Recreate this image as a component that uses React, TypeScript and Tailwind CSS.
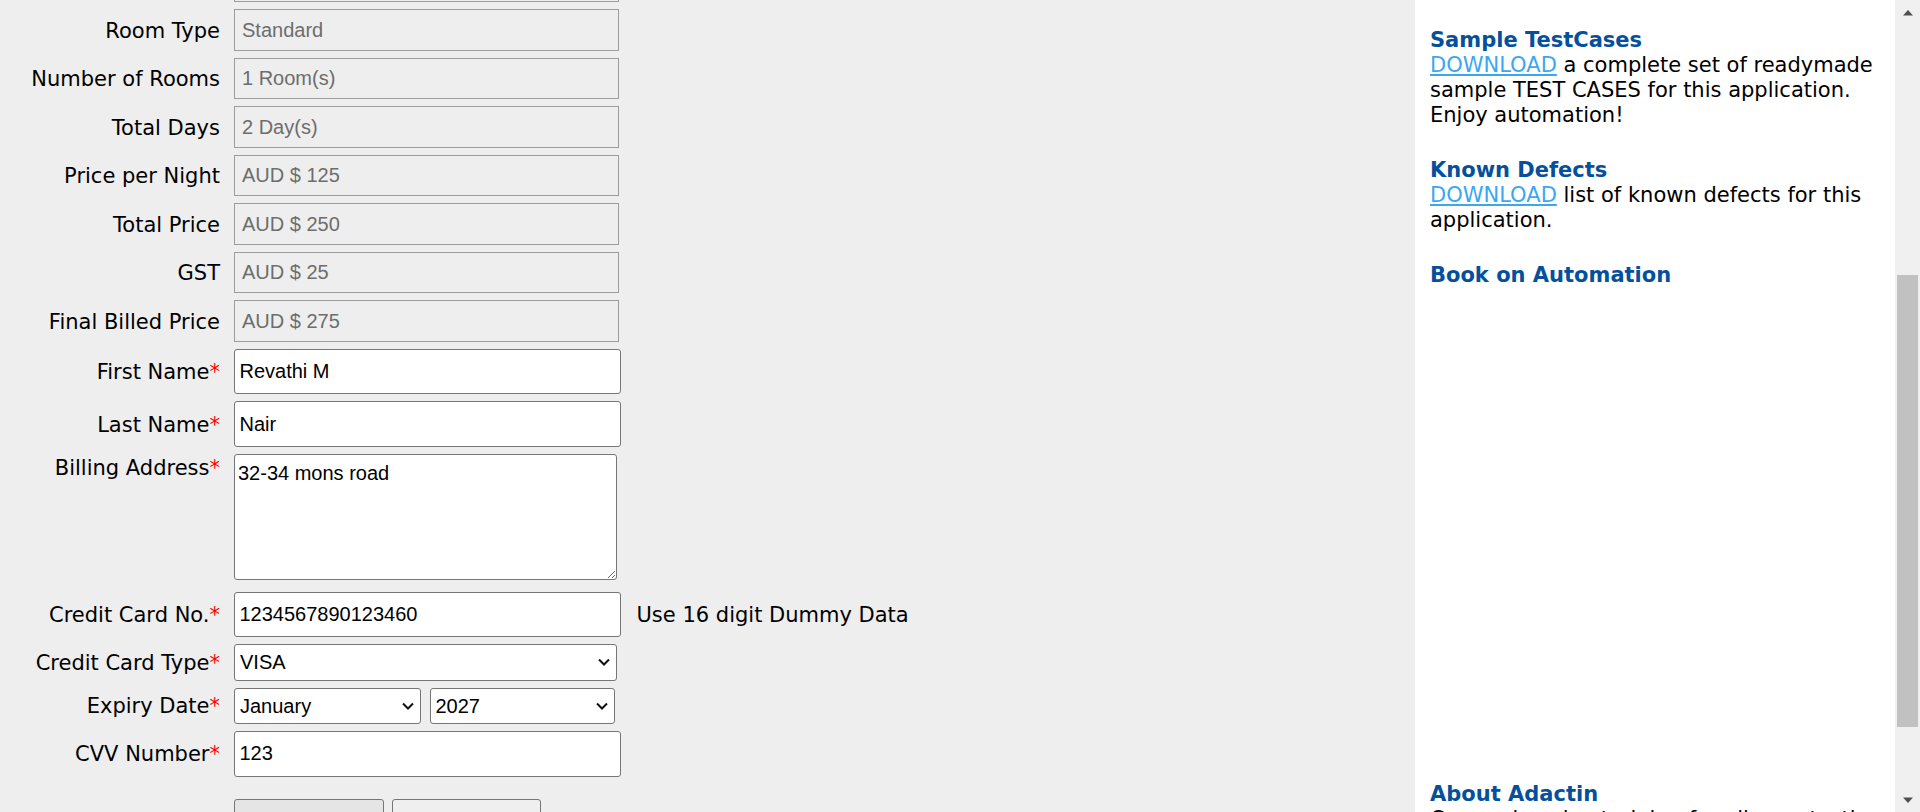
import React from "react";

const LABEL_FONT = "font-['DejaVu_Sans','Verdana',sans-serif]";

function Chevron() {
  return (
    <svg
      className="pointer-events-none absolute right-[7px] top-1/2 -translate-y-1/2"
      width="12"
      height="8"
      viewBox="0 0 12 8"
      fill="none"
    >
      <path d="M1 1.5 L6 6.5 L11 1.5" stroke="#111" strokeWidth="2" />
    </svg>
  );
}

function Label({ text, req }: { text: string; req?: boolean }) {
  return (
    <div className="w-[220px] shrink-0 pt-[2px] text-right text-[21px] leading-[25px] text-black">
      {text}
      {req ? <span className="text-[21px] text-[#ff0000]">*</span> : null}
    </div>
  );
}

function ReadOnlyRow({ label, value }: { label: string; value: string }) {
  return (
    <div className="flex items-center gap-[14px]">
      <Label text={label} />
      <input
        readOnly
        value={value}
        className="h-[41.5px] w-[385px] border border-[#9c9c9c] bg-[#eeeeee] pl-[7px] font-['Liberation_Sans',Arial,sans-serif] text-[20px] text-[#6d6d6d] outline-none"
      />
    </div>
  );
}

function TextRow({ label, value }: { label: string; value: string }) {
  return (
    <div className="flex items-center gap-[14px]">
      <Label text={label} req />
      <input
        readOnly
        value={value}
        className="h-[45.5px] w-[386.5px] rounded-[3px] border border-[#767676] bg-white pl-[4.5px] font-['Liberation_Sans',Arial,sans-serif] text-[20px] text-black outline-none"
      />
    </div>
  );
}

export default function App() {
  return (
    <div className={`flex h-[812px] w-[1920px] overflow-hidden bg-[#eeeeee] ${LABEL_FONT}`}>
      {/* Main form area */}
      <div className="w-[1415px] shrink-0 overflow-hidden">
        <div className="mt-[-39.2px] flex flex-col gap-[7px]">
          <ReadOnlyRow label="Hotel Name" value="Hotel Creek" />
          <ReadOnlyRow label="Room Type" value="Standard" />
          <ReadOnlyRow label="Number of Rooms" value="1 Room(s)" />
          <ReadOnlyRow label="Total Days" value="2 Day(s)" />
          <ReadOnlyRow label="Price per Night" value="AUD $ 125" />
          <ReadOnlyRow label="Total Price" value="AUD $ 250" />
          <ReadOnlyRow label="GST" value="AUD $ 25" />
          <ReadOnlyRow label="Final Billed Price" value="AUD $ 275" />
          <TextRow label="First Name" value="Revathi M" />
          <TextRow label="Last Name" value="Nair" />

          <div className="flex items-start gap-[14px]">
            <Label text="Billing Address" req />
            <textarea
              readOnly
              defaultValue="32-34 mons road"
              className="h-[126.5px] w-[382.5px] resize rounded-[3px] border border-[#767676] bg-white pl-[3px] pt-[7px] font-['Liberation_Sans',Arial,sans-serif] text-[20px] leading-[23px] text-black outline-none"
            />
          </div>

          <div className="mt-[4.5px] flex items-center gap-[14px]">
            <Label text="Credit Card No." req />
            <input
              readOnly
              value="1234567890123460"
              className="h-[45px] w-[386.5px] rounded-[3px] border border-[#767676] bg-white pl-[4.5px] font-['Liberation_Sans',Arial,sans-serif] text-[20px] text-black outline-none"
            />
            <span className="ml-[2px] pt-[2px] text-[21px] leading-[25px] text-black">
              Use 16 digit Dummy Data
            </span>
          </div>

          <div className="flex items-center gap-[14px]">
            <Label text="Credit Card Type" req />
            <div className="relative h-[37px] w-[382.5px]">
              <select
                defaultValue="VISA"
                className="h-full w-full appearance-none rounded-[3px] border border-[#767676] bg-white pl-[5px] font-['Liberation_Sans',Arial,sans-serif] text-[20px] text-black outline-none"
              >
                <option>VISA</option>
                <option>American Express</option>
                <option>Master Card</option>
              </select>
              <Chevron />
            </div>
          </div>

          <div className="flex items-center gap-[14px]">
            <Label text="Expiry Date" req />
            <div className="flex gap-[8.5px]">
              <div className="relative h-[36px] w-[187px]">
                <select
                  defaultValue="January"
                  className="h-full w-full appearance-none rounded-[3px] border border-[#767676] bg-white pl-[5px] font-['Liberation_Sans',Arial,sans-serif] text-[20px] text-black outline-none"
                >
                  <option>January</option>
                  <option>February</option>
                </select>
                <Chevron />
              </div>
              <div className="relative h-[36px] w-[185.5px]">
                <select
                  defaultValue="2027"
                  className="h-full w-full appearance-none rounded-[3px] border border-[#767676] bg-white pl-[5px] font-['Liberation_Sans',Arial,sans-serif] text-[20px] text-black outline-none"
                >
                  <option>2026</option>
                  <option>2027</option>
                </select>
                <Chevron />
              </div>
            </div>
          </div>

          <div className="flex items-center gap-[14px]">
            <Label text="CVV Number" req />
            <input
              readOnly
              value="123"
              className="h-[46px] w-[386.5px] rounded-[3px] border border-[#767676] bg-white pl-[4.5px] font-['Liberation_Sans',Arial,sans-serif] text-[20px] text-black outline-none"
            />
          </div>

          <div className="mt-[15px] flex items-center gap-[14px]">
            <div className="w-[220px] shrink-0" />
            <div className="flex gap-[8px]">
              <button className="h-[45px] w-[149.5px] rounded-[3px] border border-[#767676] bg-[#e5e5e5] font-['Liberation_Sans',Arial,sans-serif] text-[20px] text-black">
                Book Now
              </button>
              <button className="h-[45px] w-[149.5px] rounded-[3px] border border-[#767676] bg-[#efefef] font-['Liberation_Sans',Arial,sans-serif] text-[20px] text-black">
                Cancel
              </button>
            </div>
          </div>
        </div>
      </div>

      {/* Right sidebar */}
      <div className="w-[480px] shrink-0 bg-white pl-[15px] pr-[10px] pt-[28px] text-[21px] leading-[25px] text-black">
        <div className="font-bold text-[#05509c]">Sample TestCases</div>
        <div>
          <a className="text-[#3ba7f3] underline">DOWNLOAD</a> a complete set of readymade sample
          TEST CASES for this application. Enjoy automation!
        </div>

        <div className="mt-[30px] font-bold text-[#05509c]">Known Defects</div>
        <div>
          <a className="text-[#3ba7f3] underline">DOWNLOAD</a> list of known defects for this
          application.
        </div>

        <div className="mt-[30px] font-bold text-[#05509c]">Book on Automation</div>
        <div className="h-[494px]" />

        <div className="font-bold text-[#05509c]">About Adactin</div>
        <div>Comprehensive training for all your testing needs</div>
      </div>

      {/* Scrollbar */}
      <div className="flex w-[25px] shrink-0 flex-col bg-[#f0f0f0]">
        <div className="flex h-[25px] items-center justify-center">
          <svg width="10" height="6" viewBox="0 0 10 6">
            <polygon points="0,5.5 5,0 10,5.5" fill="#505050" />
          </svg>
        </div>
        <div className="h-[250px]" />
        <div className="ml-[2px] h-[452px] w-[21px] bg-[#c1c1c1]" />
        <div className="flex-1" />
        <div className="flex h-[25px] items-center justify-center">
          <svg width="10" height="6" viewBox="0 0 10 6">
            <polygon points="0,0.5 10,0.5 5,6" fill="#505050" />
          </svg>
        </div>
      </div>
    </div>
  );
}
